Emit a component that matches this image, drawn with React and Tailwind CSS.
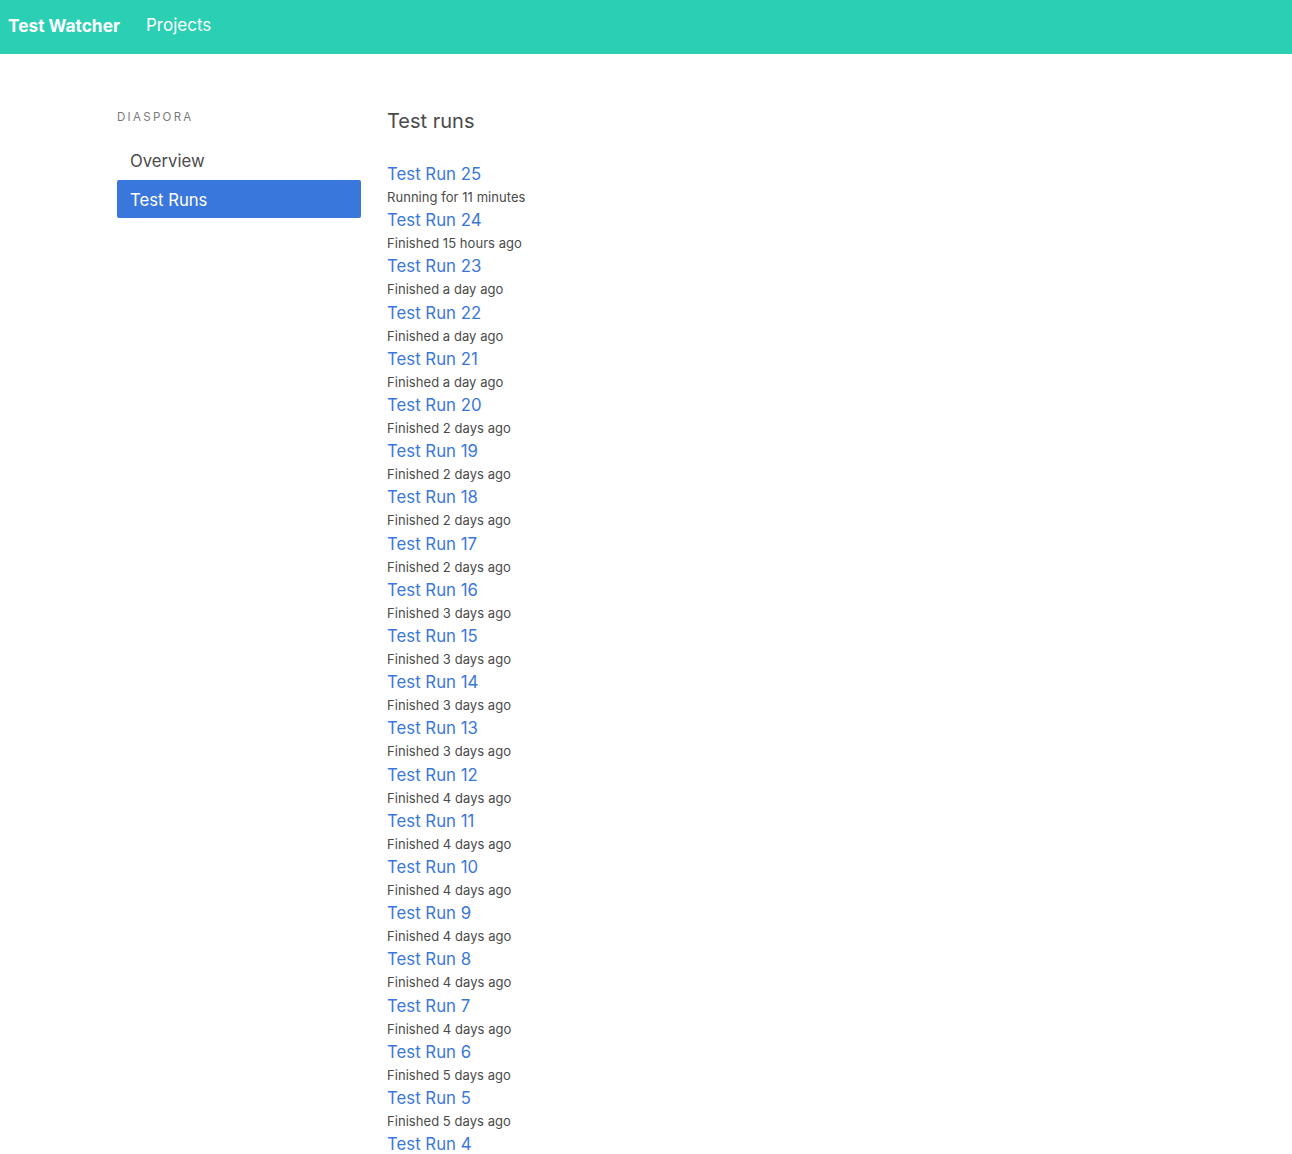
const runs = [
  [25, "Running for 11 minutes"],
  [24, "Finished 15 hours ago"],
  [23, "Finished a day ago"],
  [22, "Finished a day ago"],
  [21, "Finished a day ago"],
  [20, "Finished 2 days ago"],
  [19, "Finished 2 days ago"],
  [18, "Finished 2 days ago"],
  [17, "Finished 2 days ago"],
  [16, "Finished 3 days ago"],
  [15, "Finished 3 days ago"],
  [14, "Finished 3 days ago"],
  [13, "Finished 3 days ago"],
  [12, "Finished 4 days ago"],
  [11, "Finished 4 days ago"],
  [10, "Finished 4 days ago"],
  [9, "Finished 4 days ago"],
  [8, "Finished 4 days ago"],
  [7, "Finished 4 days ago"],
  [6, "Finished 5 days ago"],
  [5, "Finished 5 days ago"],
  [4, "Finished 5 days ago"],
];

export default function App() {
  return (
    <div className="min-h-screen bg-white text-[#4a4a4a]" style={{ fontFamily: 'Inter, "Noto Sans", "Liberation Sans", sans-serif' }}>
      <nav className="h-[54px] bg-[#2bd0b4] flex items-center pb-[2px] text-white">
        <a className="pl-[8px] pr-[26px] text-[17.3px] font-bold">Test Watcher</a>
        <a className="text-[17px]">Projects</a>
      </nav>
      <div className="flex pl-[117px] pt-[55px]">
        <aside className="w-[244px] shrink-0">
          <p className="text-[11.5px] leading-[15px] tracking-[0.2em] uppercase text-[#7a7a7a] mt-[1px]">Diaspora</p>
          <ul className="mt-[16px] flex flex-col gap-[1px]">
            <li className="h-[38px] px-[13px] pt-[3px] flex items-center text-[16.7px] text-[#4a4a4a]">Overview</li>
            <li className="h-[38px] px-[13px] pt-[3px] flex items-center text-[16.7px] text-white bg-[#3a77dc] rounded-[2px]">Test Runs</li>
          </ul>
        </aside>
        <main className="ml-[26px]">
          <h1 className="text-[20px] leading-[22px] text-[#4a4a4a] mt-[1px]">Test runs</h1>
          <ul className="mt-[29px]">
            {runs.map(([n, s]) => (
              <li key={n}>
                <a className="block text-[16.8px] leading-[26px] text-[#3a77dc]">Test Run {n}</a>
                <p className="text-[13px] leading-[20.2px] tracking-[0.05px] text-[#4a4a4a]">{s}</p>
              </li>
            ))}
          </ul>
        </main>
      </div>
    </div>
  );
}
